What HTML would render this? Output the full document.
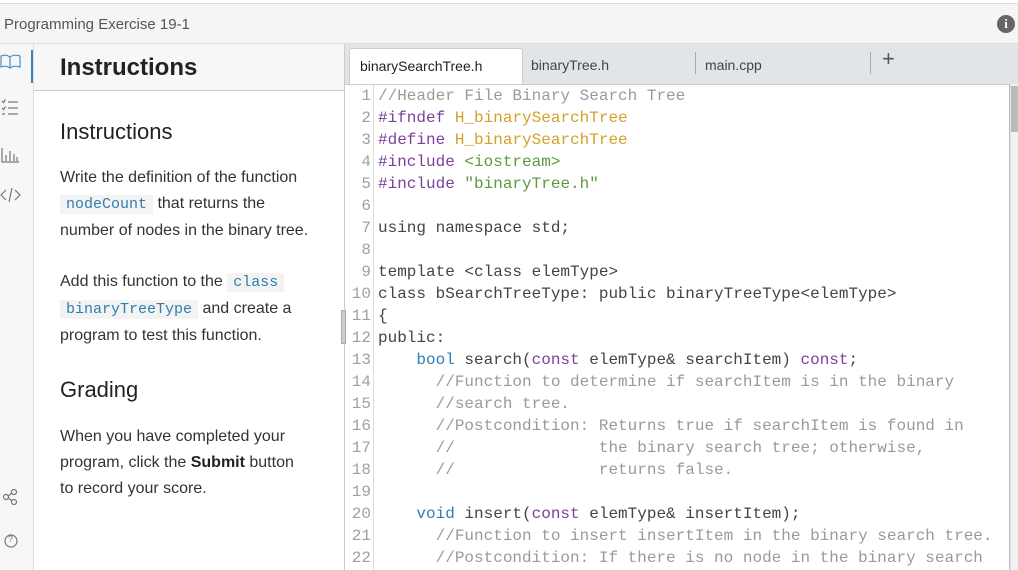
<!DOCTYPE html>
<html><head><meta charset="utf-8"><style>
*{margin:0;padding:0;box-sizing:border-box}
body{width:1018px;height:570px;overflow:hidden;background:#fff;font-family:"Liberation Sans",sans-serif;position:relative}
.top{position:absolute;left:0;top:3px;width:1018px;height:41px;background:#f5f5f5;border-top:1px solid #ddd;border-bottom:1px solid #ddd}
.top .t{position:absolute;left:4px;top:12px;font-size:15px;color:#555}
.info{position:absolute;right:3px;top:11px;width:18px;height:18px;border-radius:50%;background:#666;color:#fff;font:bold 13px "Liberation Serif",serif;text-align:center;line-height:18px}
.side{position:absolute;left:0;top:44px;width:34px;height:526px;background:#f7f7f7;border-right:1px solid #ddd}
.sel{position:absolute;left:31px;top:50px;width:2px;height:33px;background:#3b83c0}
.ins{position:absolute;left:34px;top:44px;width:311px;height:526px;background:#fff}
.ihead{height:47px;background:#f7f7f7;border-bottom:1px solid #ccc;padding-left:26px;font-size:24px;font-weight:bold;color:#222;line-height:47px}
.ins h2{position:absolute;left:26px;font-size:22px;font-weight:normal;color:#222}
.ins p{position:absolute;left:26px;width:250px;font-size:16px;color:#333;line-height:26px}
code{font-family:"Liberation Mono",monospace;font-size:15px;color:#2d7fb0;background:#f3f3f3;padding:1px 6px}
.ed{position:absolute;left:344px;top:44px;width:674px;height:526px;background:#e1e4e8;border-left:1px solid #ccc}
.tab{position:absolute;top:4px;height:36px;font-size:14px;color:#444;padding:9px 10px}
.tab.a{background:#fff;left:4px;width:174px;border:1px solid #ccc;border-bottom:none;border-radius:3px 3px 0 0;color:#222}
.code{position:absolute;left:0;top:40px;width:665px;height:486px;background:#fff;border-top:1px solid #ccc;border-right:1px solid #bbb;overflow:hidden}
.gut{position:absolute;left:0;top:0;width:29px;height:100%;border-right:1px solid #ddd}
.ln{position:absolute;left:0;width:26px;text-align:right;font:16px "Liberation Mono",monospace;color:#a0a0a0}
.cl{position:absolute;left:33px;white-space:pre;font:16px "Liberation Mono",monospace;color:#444}
.c{color:#9a9a9a}.k{color:#7d3f9e}.m{color:#d4a02a}.s{color:#5d9a3c}.b{color:#2d7fb0}
.sb{position:absolute;left:666px;top:40px;width:8px;height:486px;background:#f2f2f2}
.sb i{position:absolute;left:0;top:2px;width:8px;height:46px;background:#bbb}
</style></head><body>
<div class="top"><span class="t">Programming Exercise 19-1</span><div class="info">i</div></div>
<div class="side">
<svg width="34" height="526" style="position:absolute;left:0;top:0" fill="none" stroke="#4a8ec5" stroke-width="1.2">
<path d="M1 12 Q6 10 10 13 Q14 10 20 12 V23 Q14 21 10 24 Q6 21 1 23Z M10 13V24"/>
<g stroke="#777"><path d="M8 58H18M8 64H18M8 70H18M2 57l1.5 1.5 2-3M2 64l1.5 1.5 2-3M2 70h3"/>
<path d="M2 104V118H19M6 117V111M10 117V107M14 117V110M17 117V113"/>
<path d="M6 146l-5 5 5 5M15 146l5 5-5 5M12 144l-3 14"/>
<circle cx="6" cy="453" r="2.5"/><circle cx="14" cy="448" r="2.5"/><circle cx="14" cy="458" r="2.5"/><path d="M8 452l4-3M8 454l4 3"/>
<circle cx="11" cy="497" r="6"/></g></svg>
<span style="position:absolute;left:8px;top:490px;font-size:9px;color:#777">?</span>
</div>
<div class="sel"></div>
<div class="ins">
<div class="ihead">Instructions</div>
<h2 style="top:75px">Instructions</h2>
<p style="top:121px">Write the definition of the function <code>nodeCount</code> that returns the number of nodes in the binary tree.</p>
<p style="top:225px">Add this function to the <code>class</code> <code>binaryTreeType</code> and create a program to test this function.</p>
<h2 style="top:333px">Grading</h2>
<p style="top:380px">When you have completed your program, click the <b style="color:#222">Submit</b> button to record your score.</p>
</div>
<div class="ed">
<div class="tab a">binarySearchTree.h</div>
<div class="tab" style="left:176px">binaryTree.h</div>
<div style="position:absolute;left:350px;top:8px;width:1px;height:22px;background:#aaa"></div>
<div class="tab" style="left:350px">main.cpp</div>
<div style="position:absolute;left:525px;top:8px;width:1px;height:22px;background:#aaa"></div>
<div style="position:absolute;left:537px;top:2px;font-size:22px;color:#555">+</div>
<div class="code"><div class="gut"></div>
<div id="L"></div>
</div>
<div class="sb"><i></i></div>
<div style="position:absolute;left:-4px;top:266px;width:5px;height:34px;background:#ccc;border:1px solid #aaa"></div>
</div>
<script>
var lines=[
'<span class="c">//Header File Binary Search Tree</span>',
'<span class="k">#ifndef</span> <span class="m">H_binarySearchTree</span>',
'<span class="k">#define</span> <span class="m">H_binarySearchTree</span>',
'<span class="k">#include</span> <span class="s">&lt;iostream&gt;</span>',
'<span class="k">#include</span> <span class="s">"binaryTree.h"</span>',
'',
'using namespace std;',
'',
'template &lt;class elemType&gt;',
'class bSearchTreeType: public binaryTreeType&lt;elemType&gt;',
'{',
'public:',
'    <span class="b">bool</span> search(<span class="k">const</span> elemType&amp; searchItem) <span class="k">const</span>;',
'      <span class="c">//Function to determine if searchItem is in the binary</span>',
'      <span class="c">//search tree.</span>',
'      <span class="c">//Postcondition: Returns true if searchItem is found in</span>',
'      <span class="c">//               the binary search tree; otherwise,</span>',
'      <span class="c">//               returns false.</span>',
'',
'    <span class="b">void</span> insert(<span class="k">const</span> elemType&amp; insertItem);',
'      <span class="c">//Function to insert insertItem in the binary search tree.</span>',
'      <span class="c">//Postcondition: If there is no node in the binary search</span>'];
var h='';
for(var i=0;i<lines.length;i++){var t=i*22+2;
h+='<div class="ln" style="top:'+t+'px">'+(i+1)+'</div><div class="cl" style="top:'+t+'px">'+lines[i]+'</div>';}
document.getElementById('L').innerHTML=h;
</script>
</body></html>
